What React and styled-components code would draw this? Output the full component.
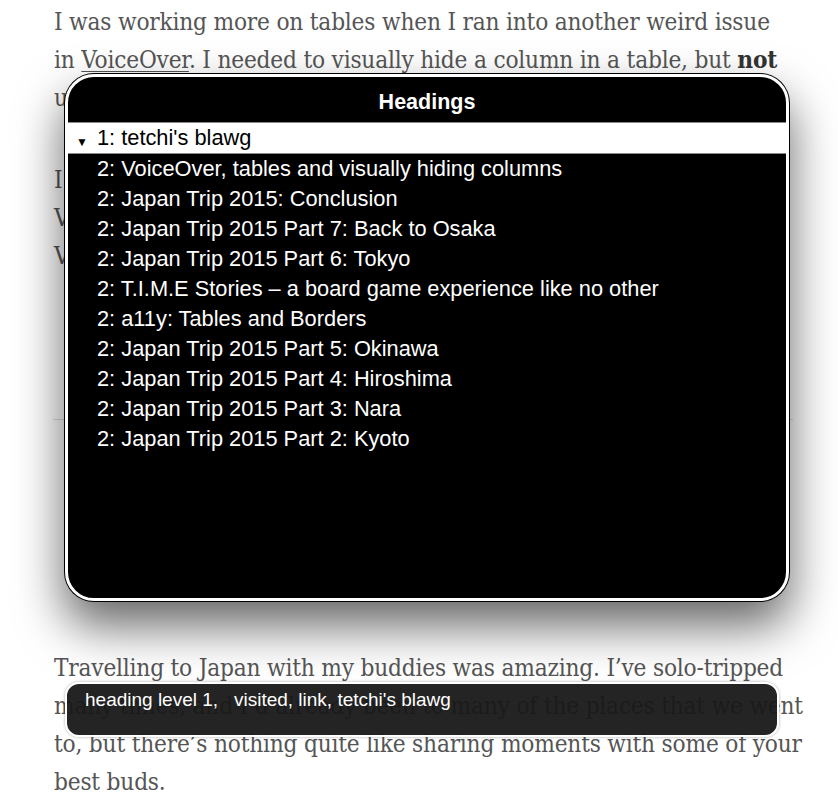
import styled, { createGlobalStyle } from "styled-components";

const GlobalStyle = createGlobalStyle`
  body {
    margin: 0;
    background: #fff;
  }
`;

const headings = [
  "1: tetchi's blawg",
  "2: VoiceOver, tables and visually hiding columns",
  "2: Japan Trip 2015: Conclusion",
  "2: Japan Trip 2015 Part 7: Back to Osaka",
  "2: Japan Trip 2015 Part 6: Tokyo",
  "2: T.I.M.E Stories – a board game experience like no other",
  "2: a11y: Tables and Borders",
  "2: Japan Trip 2015 Part 5: Okinawa",
  "2: Japan Trip 2015 Part 4: Hiroshima",
  "2: Japan Trip 2015 Part 3: Nara",
  "2: Japan Trip 2015 Part 2: Kyoto",
];

const App = () => {
  return (
    <Page>
      <GlobalStyle />
      <Article>
        <Para>
          I was working more on tables when I ran into another weird issue
          <br />
          in <Link>VoiceOver</Link>. I needed to visually hide a column in a table, but <b>not</b>
          <br />
          unhide it from screen readers. Here's what I found.
        </Para>
        <Para>
          I tried the usual visually hidden class on the table cells, and
          <br />
          VoiceOver would skip the whole column when navigating the table.
          <br />
          VoiceOver users would never know the hidden column existed.
        </Para>
        <Rule />
        <Para>
          Travelling to Japan with my buddies was amazing. I’ve solo-tripped
          <br />
          many times, and I’d already been to many of the places that we went
          <br />
          to, but there’s nothing quite like sharing moments with some of your
          <br />
          best buds.
        </Para>
      </Article>

      <Rotor>
        <RotorInner>
          <RotorTitle>Headings</RotorTitle>
          <RotorList>
            {headings.map((h, i) => (
              <RotorItem key={h} selected={i === 0}>
                {i === 0 && <Caret>▼</Caret>}
                {h}
              </RotorItem>
            ))}
          </RotorList>
        </RotorInner>
      </Rotor>

      <Caption>heading level 1,&nbsp;&nbsp; visited, link, tetchi's blawg</Caption>
    </Page>
  );
};

const Page = styled.div`
  position: relative;
  width: 838px;
  height: 809px;
  overflow: hidden;
`;

const Article = styled.article`
  padding: 3px 0 0 54px;
  font-family: "DejaVu Serif Condensed", "DejaVu Serif", serif;
  font-stretch: condensed;
  font-size: 24.2px;
  letter-spacing: -0.2px;
  line-height: 38px;
  color: #555;
`;

const Para = styled.p`
  margin: 0 0 44px;
  white-space: nowrap;

  b {
    color: #333;
  }
`;

const Link = styled.span`
  text-decoration: underline;
  text-decoration-thickness: 1px;
  text-underline-offset: 3px;
`;

const Rule = styled.hr`
  border: 0;
  border-top: 1px solid #ddd;
  margin: 144px 0 229px -1px;
  width: 740px;
`;

const Rotor = styled.div`
  position: absolute;
  left: 64px;
  top: 73px;
  width: 726px;
  height: 529px;
  box-sizing: border-box;
  border-radius: 30px;
  background: #000;
  padding: 1px;
  box-shadow: 0 24px 48px rgba(0, 0, 0, 0.6);
`;

const RotorInner = styled.div`
  height: 100%;
  box-sizing: border-box;
  border: 3px solid #fff;
  border-radius: 29px;
  background: #000;
  overflow: hidden;
  display: flex;
  flex-direction: column;
  font-family: "Liberation Sans", Arial, sans-serif;
  color: #fff;
`;

const RotorTitle = styled.div`
  height: 45px;
  display: flex;
  align-items: center;
  justify-content: center;
  font-weight: bold;
  font-size: 21.5px;
  padding-top: 5px;
  box-sizing: border-box;
`;

const RotorList = styled.div`
  display: flex;
  flex-direction: column;
`;

const RotorItem = styled.div`
  position: relative;
  height: 30px;
  line-height: 30px;
  padding-left: 29px;
  font-size: 21.8px;
  white-space: nowrap;
  background: ${({ selected }) => (selected ? "#fff" : "transparent")};
  color: ${({ selected }) => (selected ? "#000" : "#fff")};
  border-top: ${({ selected }) => (selected ? "1px solid #888" : "0")};
  border-bottom: ${({ selected }) => (selected ? "1px solid #888" : "0")};
`;

const Caret = styled.span`
  position: absolute;
  left: 8px;
  top: 4px;
  font-size: 12px;
`;

const Caption = styled.div`
  position: absolute;
  left: 65px;
  top: 682px;
  width: 714px;
  height: 55px;
  box-sizing: border-box;
  border: 2px solid #fff;
  border-radius: 14px;
  background: rgba(24, 24, 24, 0.95);
  box-shadow: 0 0 3px rgba(0, 0, 0, 0.35);
  padding: 5px 0 0 18px;
  font-family: "Liberation Sans", Arial, sans-serif;
  font-size: 19px;
  color: #fff;
  white-space: pre;
`;

export default App;
